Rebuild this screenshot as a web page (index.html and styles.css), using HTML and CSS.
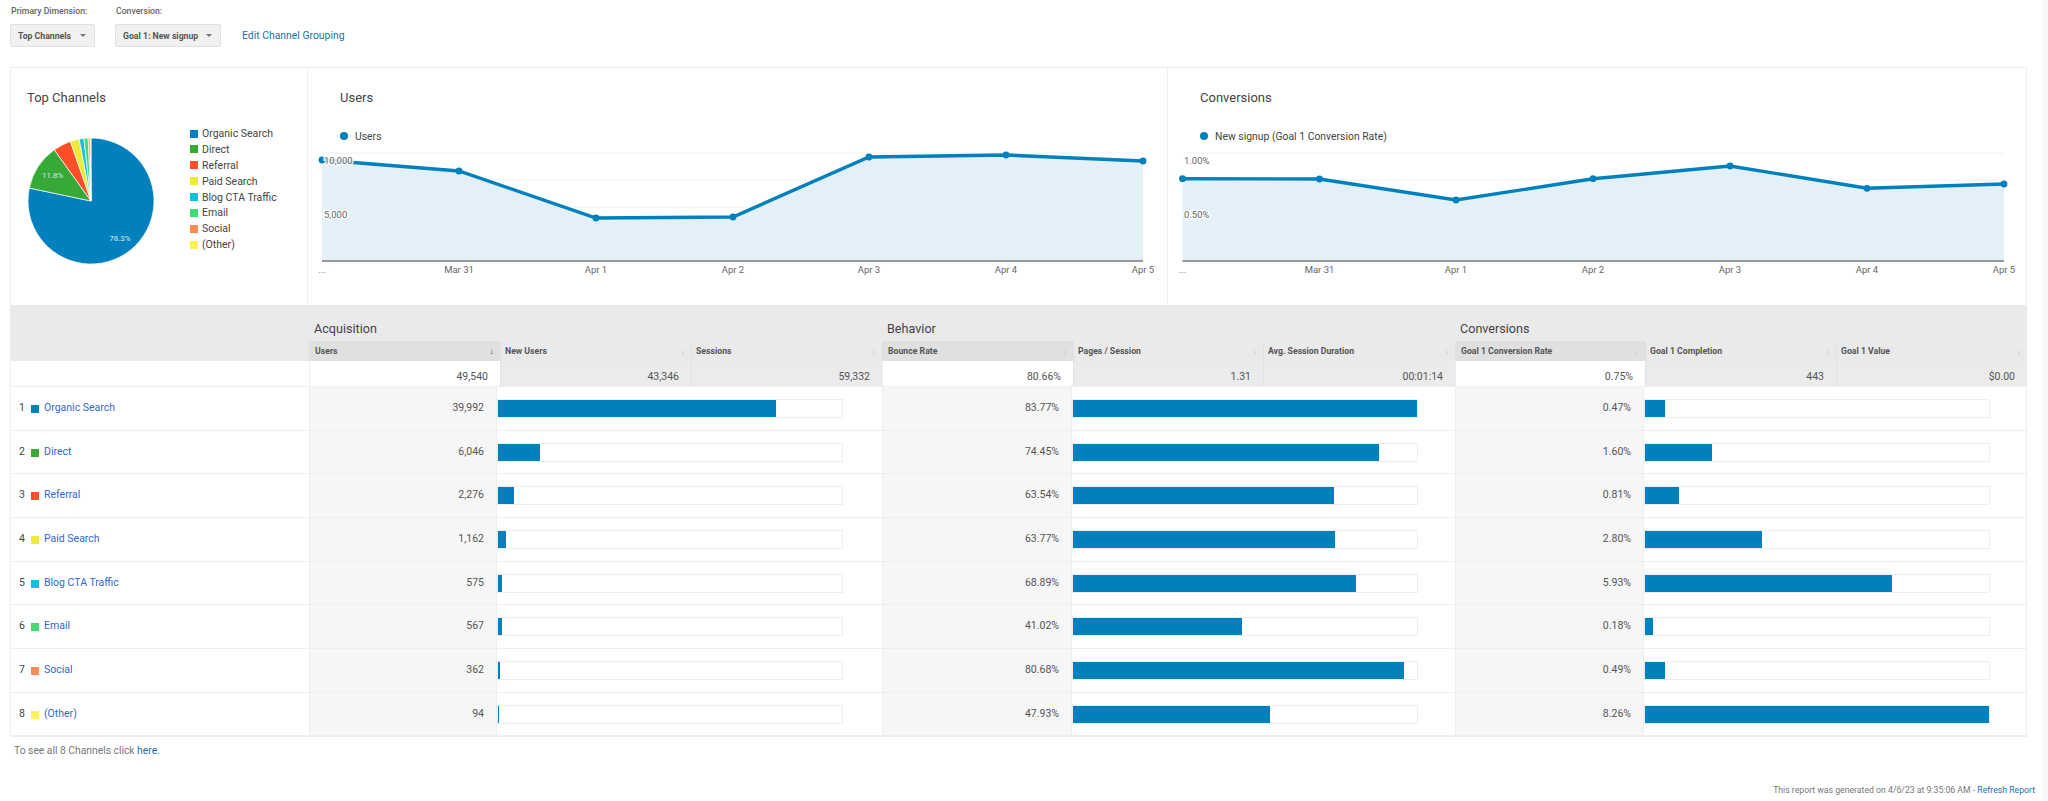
FILE: index.html
```html
<!DOCTYPE html>
<html lang="en">
<head>
<meta charset="utf-8">
<title>Top Channels</title>
<link rel="stylesheet" href="styles.css">
</head>
<body>
<div class="page">
  <div class="controls">
    <div class="control control-a">
      <div class="control-label">Primary Dimension:</div>
      <div class="select select-a"><span>Top Channels</span><i class="caret"></i></div>
    </div>
    <div class="control control-b">
      <div class="control-label">Conversion:</div>
      <div class="select select-b"><span>Goal 1: New signup</span><i class="caret"></i></div>
    </div>
    <a class="edit-link">Edit Channel Grouping</a>
  </div>

  <div class="cards">
    <section class="panel panel-pie">
      <h2 class="panel-title">Top Channels</h2>
      <div class="pie-body">
        <svg class="pie" width="128" height="128" viewBox="0 0 128 128">
          <g stroke="#fff" stroke-width="0.7">
            <path fill="#0081bd" d="M64 64 L64 1 A63 63 0 1 1 2.34 51.08 Z"/>
            <path fill="#36a936" d="M64 64 L2.34 51.08 A63 63 0 0 1 27.3 12.8 Z"/>
            <path fill="#ff4f28" d="M64 64 L27.3 12.8 A63 63 0 0 1 43.4 4.46 Z"/>
            <path fill="#eeea36" d="M64 64 L43.4 4.46 A63 63 0 0 1 52.2 2.12 Z"/>
            <path fill="#14c0de" d="M64 64 L52.2 2.12 A63 63 0 0 1 56.9 1.4 Z"/>
            <path fill="#3fdd74" d="M64 64 L56.9 1.4 A63 63 0 0 1 61.2 1.06 Z"/>
            <path fill="#ff8a52" d="M64 64 L61.2 1.06 A63 63 0 0 1 63.2 1 Z"/>
            <path fill="#ffee60" d="M64 64 L63.2 1 A63 63 0 0 1 64 1 Z"/>
          </g>
          <text class="pie-label" x="25.7" y="41" text-anchor="middle">11.8%</text>
          <text class="pie-label" x="93" y="103.5" text-anchor="middle">78.3%</text>
        </svg>
        <ul class="legend">
          <li><i class="swatch c1"></i>Organic Search</li>
          <li><i class="swatch c2"></i>Direct</li>
          <li><i class="swatch c3"></i>Referral</li>
          <li><i class="swatch c4"></i>Paid Search</li>
          <li><i class="swatch c5"></i>Blog CTA Traffic</li>
          <li><i class="swatch c6"></i>Email</li>
          <li><i class="swatch c7"></i>Social</li>
          <li><i class="swatch c8"></i>(Other)</li>
        </ul>
      </div>
    </section>

    <section class="panel panel-chart panel-users">
      <h2 class="panel-title">Users</h2>
      <div class="chart-legend"><i class="dot"></i>Users</div>
      <svg class="chart" width="860" height="135" viewBox="307 150 860 135">
        <line class="grid" x1="321" x2="1142" y1="153" y2="153"/>
        <line class="grid" x1="321" x2="1142" y1="180" y2="180"/>
        <line class="grid" x1="321" x2="1142" y1="207" y2="207"/>
        <line class="grid" x1="321" x2="1142" y1="234" y2="234"/>
        <polygon class="area" points="321,160 458,171 595,218 732,217 868,157 1005,155 1142,161 1142,260 321,260"/>
        <line class="axis" x1="321" x2="1142" y1="261" y2="261"/>
        <polyline class="line" points="321,160 458,171 595,218 732,217 868,157 1005,155 1142,161"/>
        <g class="points">
          <circle cx="321" cy="160" r="3.4"/><circle cx="458" cy="171" r="3.4"/><circle cx="595" cy="218" r="3.4"/><circle cx="732" cy="217" r="3.4"/><circle cx="868" cy="157" r="3.4"/><circle cx="1005" cy="155" r="3.4"/><circle cx="1142" cy="161" r="3.4"/>
        </g>
        <text class="tick halo" x="323" y="164">10,000</text>
        <text class="tick halo" x="323" y="217.5">5,000</text>
        <g class="tick mid">
          <text x="321" y="273">...</text><text x="458" y="273">Mar 31</text><text x="595" y="273">Apr 1</text><text x="732" y="273">Apr 2</text><text x="868" y="273">Apr 3</text><text x="1005" y="273">Apr 4</text><text x="1142" y="273">Apr 5</text>
        </g>
      </svg>
    </section>

    <section class="panel panel-chart panel-conv">
      <h2 class="panel-title">Conversions</h2>
      <div class="chart-legend"><i class="dot"></i>New signup (Goal 1 Conversion Rate)</div>
      <svg class="chart" width="860" height="135" viewBox="1167 150 860 135">
        <line class="grid" x1="1181.5" x2="2003" y1="153" y2="153"/>
        <line class="grid" x1="1181.5" x2="2003" y1="180" y2="180"/>
        <line class="grid" x1="1181.5" x2="2003" y1="207" y2="207"/>
        <line class="grid" x1="1181.5" x2="2003" y1="234" y2="234"/>
        <polygon class="area" points="1181.5,178.7 1318.5,179 1455,200 1592,178.7 1729,166 1866,188.3 2003,184 2003,260 1181.5,260"/>
        <line class="axis" x1="1181.5" x2="2003" y1="261" y2="261"/>
        <polyline class="line" points="1181.5,178.7 1318.5,179 1455,200 1592,178.7 1729,166 1866,188.3 2003,184"/>
        <g class="points">
          <circle cx="1181.5" cy="178.7" r="3.4"/><circle cx="1318.5" cy="179" r="3.4"/><circle cx="1455" cy="200" r="3.4"/><circle cx="1592" cy="178.7" r="3.4"/><circle cx="1729" cy="166" r="3.4"/><circle cx="1866" cy="188.3" r="3.4"/><circle cx="2003" cy="184" r="3.4"/>
        </g>
        <text class="tick halo" x="1183" y="164">1.00%</text>
        <text class="tick halo" x="1183" y="217.5">0.50%</text>
        <g class="tick mid">
          <text x="1181.5" y="273">...</text><text x="1318.5" y="273">Mar 31</text><text x="1455" y="273">Apr 1</text><text x="1592" y="273">Apr 2</text><text x="1729" y="273">Apr 3</text><text x="1866" y="273">Apr 4</text><text x="2003" y="273">Apr 5</text>
        </g>
      </svg>
    </section>
  </div>

  <div class="report">
    <div class="groups">
      <div></div>
      <div class="group">Acquisition</div>
      <div class="group">Behavior</div>
      <div class="group">Conversions</div>
    </div>
    <div class="cols">
      <div></div>
      <div class="col active"><span>Users</span><i class="sort on">↓</i></div>
      <div class="col"><span>New Users</span><i class="sort">↓</i></div>
      <div class="col"><span>Sessions</span><i class="sort">↓</i></div>
      <div class="col active"><span>Bounce Rate</span><i class="sort">↓</i></div>
      <div class="col"><span>Pages / Session</span><i class="sort">↓</i></div>
      <div class="col"><span>Avg. Session Duration</span><i class="sort">↓</i></div>
      <div class="col active"><span>Goal 1 Conversion Rate</span><i class="sort">↓</i></div>
      <div class="col"><span>Goal 1 Completion</span><i class="sort">↓</i></div>
      <div class="col"><span>Goal 1 Value</span><i class="sort">↓</i></div>
    </div>
    <div class="cols totals">
      <div class="total blank"></div>
      <div class="total active">49,540</div>
      <div class="total">43,346</div>
      <div class="total">59,332</div>
      <div class="total active">80.66%</div>
      <div class="total">1.31</div>
      <div class="total">00:01:14</div>
      <div class="total active">0.75%</div>
      <div class="total">443</div>
      <div class="total">$0.00</div>
    </div>

    <div class="row">
      <div class="name"><span class="num">1</span><i class="swatch c1"></i><a>Organic Search</a></div>
      <div class="val">39,992</div><div class="barcell"><div class="bar"><b style="width:80.7%"></b></div></div>
      <div class="val">83.77%</div><div class="barcell"><div class="bar"><b style="width:100%"></b></div></div>
      <div class="val">0.47%</div><div class="barcell"><div class="bar"><b style="width:5.7%"></b></div></div>
    </div>
    <div class="row">
      <div class="name"><span class="num">2</span><i class="swatch c2"></i><a>Direct</a></div>
      <div class="val">6,046</div><div class="barcell"><div class="bar"><b style="width:12.2%"></b></div></div>
      <div class="val">74.45%</div><div class="barcell"><div class="bar"><b style="width:88.9%"></b></div></div>
      <div class="val">1.60%</div><div class="barcell"><div class="bar"><b style="width:19.4%"></b></div></div>
    </div>
    <div class="row">
      <div class="name"><span class="num">3</span><i class="swatch c3"></i><a>Referral</a></div>
      <div class="val">2,276</div><div class="barcell"><div class="bar"><b style="width:4.6%"></b></div></div>
      <div class="val">63.54%</div><div class="barcell"><div class="bar"><b style="width:75.9%"></b></div></div>
      <div class="val">0.81%</div><div class="barcell"><div class="bar"><b style="width:9.8%"></b></div></div>
    </div>
    <div class="row">
      <div class="name"><span class="num">4</span><i class="swatch c4"></i><a>Paid Search</a></div>
      <div class="val">1,162</div><div class="barcell"><div class="bar"><b style="width:2.3%"></b></div></div>
      <div class="val">63.77%</div><div class="barcell"><div class="bar"><b style="width:76.1%"></b></div></div>
      <div class="val">2.80%</div><div class="barcell"><div class="bar"><b style="width:33.9%"></b></div></div>
    </div>
    <div class="row">
      <div class="name"><span class="num">5</span><i class="swatch c5"></i><a>Blog CTA Traffic</a></div>
      <div class="val">575</div><div class="barcell"><div class="bar"><b style="width:1.2%"></b></div></div>
      <div class="val">68.89%</div><div class="barcell"><div class="bar"><b style="width:82.2%"></b></div></div>
      <div class="val">5.93%</div><div class="barcell"><div class="bar"><b style="width:71.8%"></b></div></div>
    </div>
    <div class="row">
      <div class="name"><span class="num">6</span><i class="swatch c6"></i><a>Email</a></div>
      <div class="val">567</div><div class="barcell"><div class="bar"><b style="width:1.1%"></b></div></div>
      <div class="val">41.02%</div><div class="barcell"><div class="bar"><b style="width:49%"></b></div></div>
      <div class="val">0.18%</div><div class="barcell"><div class="bar"><b style="width:2.2%"></b></div></div>
    </div>
    <div class="row">
      <div class="name"><span class="num">7</span><i class="swatch c7"></i><a>Social</a></div>
      <div class="val">362</div><div class="barcell"><div class="bar"><b style="width:0.7%"></b></div></div>
      <div class="val">80.68%</div><div class="barcell"><div class="bar"><b style="width:96.3%"></b></div></div>
      <div class="val">0.49%</div><div class="barcell"><div class="bar"><b style="width:5.9%"></b></div></div>
    </div>
    <div class="row">
      <div class="name"><span class="num">8</span><i class="swatch c8"></i><a>(Other)</a></div>
      <div class="val">94</div><div class="barcell"><div class="bar"><b style="width:0.2%"></b></div></div>
      <div class="val">47.93%</div><div class="barcell"><div class="bar"><b style="width:57.2%"></b></div></div>
      <div class="val">8.26%</div><div class="barcell"><div class="bar"><b style="width:100%"></b></div></div>
    </div>
  </div>

  <div class="see-all">To see all 8 Channels click <a>here</a>.</div>
  <div class="generated">This report was generated on 4/6/23 at 9:35:06 AM - <a>Refresh Report</a></div>
</div>
</body>
</html>
```
FILE: styles.css
```css
* { box-sizing: border-box; }
html, body { margin: 0; padding: 0; background: #fff; }
body { font-family: Roboto, "Liberation Sans", sans-serif; color: #4a4a4a; height: 801px; overflow: hidden; border-right: 5px solid #f8f8f8; }
.page { padding-left: 10px; width: 2037px; }

.controls { display: flex; align-items: flex-end; height: 67px; padding-bottom: 20px; }
.control-a { width: 105px; }
.control-b { width: 127px; }
.control-label { font-size: 8.7px; font-weight: 500; color: #666; height: 24px; padding: 5px 0 0 1px; line-height: 12px; }
.select { display: flex; align-items: center; justify-content: space-between; height: 23px; background: #f1f1f1; border: 1px solid #e0e0e0; border-radius: 2px; padding: 0 8px 0 7px; font-size: 8.7px; font-weight: 700; color: #555; }
.select-a { width: 85px; }
.select-b { width: 106px; }
.caret { width: 0; height: 0; border-left: 3px solid transparent; border-right: 3px solid transparent; border-top: 3px solid #777; }
.edit-link { font-size: 10.4px; color: #1c6fab; height: 23px; line-height: 23px; }

.cards { display: grid; grid-template-columns: 297px 860px 860px; height: 238px; width: 2017px; border: 1px solid #eee; border-bottom: 0; }
.panel { border-right: 1px solid #eee; min-width: 0; }
.panel:last-child { border-right: 0; }
.panel-title { margin: 0; font-size: 13px; font-weight: 400; color: #444; line-height: 18px; padding-top: 21px; }
.panel-pie .panel-title { padding-left: 16px; }
.pie-body { display: flex; align-items: flex-start; padding-left: 16px; padding-top: 18.6px; }
.pie { margin-top: 11.4px; flex: none; }
.pie-label { font-size: 8px; fill: #dbeaf3; }
.legend { list-style: none; margin: 0 0 0 35px; padding: 0; font-size: 10.5px; color: #444; }
.legend li { display: flex; align-items: center; height: 15.9px; }
.legend .swatch { margin: 0 4px 0 0; }

.swatch { display: inline-block; flex: none; width: 8px; height: 8px; }
.c1 { background: #0081bd; }
.c2 { background: #36a936; }
.c3 { background: #ff4f28; }
.c4 { background: #eeea36; }
.c5 { background: #14c0de; }
.c6 { background: #3fdd74; }
.c7 { background: #ff8a52; }
.c8 { background: #ffee60; }

.panel-chart .panel-title { padding-left: 32px; }
.chart-legend { display: flex; align-items: center; font-size: 10.4px; color: #444; height: 14px; margin-top: 22px; padding-left: 32px; }
.dot { width: 8px; height: 8px; border-radius: 50%; background: #0081bd; margin-right: 7px; }
.chart { display: block; margin-top: 7px; }
.grid { stroke: #f0f0f0; stroke-width: 1; }
.area { fill: #e3f0f7; }
.axis { stroke: #999; stroke-width: 2; }
.line { fill: none; stroke: #0081bd; stroke-width: 3.4; }
.points circle { fill: #0081bd; }
.tick { font-size: 9.5px; fill: #666; }
.halo { paint-order: stroke; stroke: rgba(255, 255, 255, 0.85); stroke-width: 3px; }
.mid { text-anchor: middle; }

.report { width: 2017px; border: 1px solid #eee; border-top: 0; }
.groups { display: grid; grid-template-columns: 299px 573px 573px 572px; height: 36px; background: #eaeaea; margin-left: -1px; margin-right: -1px; width: 2017px; }
.group { font-size: 12.6px; color: #444; padding: 15px 0 0 5px; line-height: 18px; }
.cols { display: grid; grid-template-columns: 299px 191px 191px 191px 191px 190px 192px 190px 191px 191px; margin-left: -1px; width: 2017px; height: 20px; background: #eaeaea; }
.col { display: flex; justify-content: space-between; align-items: center; padding: 0 6px 0 4px; font-size: 8.7px; font-weight: 700; color: #555; border-left: 1px solid #e0e0e0; }
.col.active { background: #e0e0e0; padding-left: 5px; }
.sort { font-style: normal; font-size: 9px; font-weight: 400; color: #c8c8c8; }
.sort.on { color: #444; font-weight: 700; }
.totals { height: 26px; background: #fff; border-bottom: 1px solid #eee; }
.total { background: #ebebeb; font-size: 10.5px; color: #555; text-align: right; padding: 9px 12px 0 0; line-height: 13px; border-left: 1px solid #e0e0e0; }
.total.active, .total.blank { background: #fff; border-left: 1px solid #eee; }
.row { display: grid; grid-template-columns: 299px 188px 385px 190px 383px 189px 383px; margin-left: -1px; width: 2017px; height: 43.67px; border-bottom: 1px solid #eee; }
.name { display: flex; align-items: center; font-size: 10.5px; padding-left: 9px; padding-bottom: 1.4px; }
.num { width: 12px; color: #444; }
.name .swatch { margin-top: 3px; }
.name a { color: #2f67d3; margin-left: 5px; }
.val { background: #f6f6f6; border-left: 1px solid #eee; border-right: 1px solid #eee; font-size: 10.5px; color: #555; text-align: right; padding: 14px 12px 0 0; line-height: 13px; }
.barcell { padding: 12px 0 0 0; }
.bar { width: 346px; height: 19px; border: 1px solid #eee; background: #fff; }
.bar b { display: block; height: 100%; background: #0081bd; }

.see-all { font-size: 10.3px; color: #777; padding: 7px 0 0 4px; line-height: 13px; }
.see-all a { color: #1c6fab; }
.generated { font-size: 8.7px; color: #777; text-align: right; padding-top: 27px; line-height: 12px; width: 2025px; }
.generated a { color: #1c6fab; }
```
